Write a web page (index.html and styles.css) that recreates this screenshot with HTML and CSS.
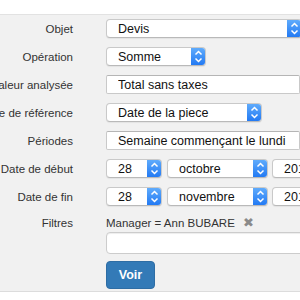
FILE: index.html
```html
<!DOCTYPE html>
<html>
  <head>
    <meta charset="utf-8" />
    <title>Analyse</title>
    <link rel="stylesheet" href="styles.css">
  </head>
  <body>
    <header class="topbar"></header>
    <main class="form">
      <div class="label">Objet</div>
      <div class="field">
        <div class="select w-objet">
          <span class="value">Devis</span>
          <span class="arrow"><svg width="15" height="19" viewBox="0 0 15 19"><path d="M4.5 7.5 7.5 4.5 10.5 7.5M4.5 11.5 7.5 14.5 10.5 11.5" fill="none" stroke="#fff" stroke-width="1.5"/></svg></span>
        </div>
      </div>

      <div class="label">Opération</div>
      <div class="field">
        <div class="select w-op">
          <span class="value">Somme</span>
          <span class="arrow"><svg width="15" height="19" viewBox="0 0 15 19"><path d="M4.5 7.5 7.5 4.5 10.5 7.5M4.5 11.5 7.5 14.5 10.5 11.5" fill="none" stroke="#fff" stroke-width="1.5"/></svg></span>
        </div>
      </div>

      <div class="label">Valeur analysée</div>
      <div class="field">
        <input class="text w-wide" type="text" value="Total sans taxes" />
      </div>

      <div class="label">Date de référence</div>
      <div class="field">
        <div class="select w-ref">
          <span class="value">Date de la piece</span>
          <span class="arrow"><svg width="15" height="19" viewBox="0 0 15 19"><path d="M4.5 7.5 7.5 4.5 10.5 7.5M4.5 11.5 7.5 14.5 10.5 11.5" fill="none" stroke="#fff" stroke-width="1.5"/></svg></span>
        </div>
      </div>

      <div class="label">Périodes</div>
      <div class="field">
        <input class="text w-wide" type="text" value="Semaine commençant le lundi" />
      </div>

      <div class="label">Date de début</div>
      <div class="field dates">
        <div class="select w-day">
          <span class="value">28</span>
          <span class="arrow"><svg width="15" height="19" viewBox="0 0 15 19"><path d="M4.5 7.5 7.5 4.5 10.5 7.5M4.5 11.5 7.5 14.5 10.5 11.5" fill="none" stroke="#fff" stroke-width="1.5"/></svg></span>
        </div>
        <div class="select w-month">
          <span class="value">octobre</span>
          <span class="arrow"><svg width="15" height="19" viewBox="0 0 15 19"><path d="M4.5 7.5 7.5 4.5 10.5 7.5M4.5 11.5 7.5 14.5 10.5 11.5" fill="none" stroke="#fff" stroke-width="1.5"/></svg></span>
        </div>
        <div class="select w-year">
          <span class="value">2016</span>
        </div>
      </div>

      <div class="label">Date de fin</div>
      <div class="field dates">
        <div class="select w-day">
          <span class="value">28</span>
          <span class="arrow"><svg width="15" height="19" viewBox="0 0 15 19"><path d="M4.5 7.5 7.5 4.5 10.5 7.5M4.5 11.5 7.5 14.5 10.5 11.5" fill="none" stroke="#fff" stroke-width="1.5"/></svg></span>
        </div>
        <div class="select w-month">
          <span class="value">novembre</span>
          <span class="arrow"><svg width="15" height="19" viewBox="0 0 15 19"><path d="M4.5 7.5 7.5 4.5 10.5 7.5M4.5 11.5 7.5 14.5 10.5 11.5" fill="none" stroke="#fff" stroke-width="1.5"/></svg></span>
        </div>
        <div class="select w-year">
          <span class="value">2016</span>
        </div>
      </div>

      <div class="label top">Filtres</div>
      <div class="field filters">
        <div class="tag">Manager = Ann BUBARE <span class="remove">✖</span></div>
        <input class="text filter-input" type="text" value="" />
        <button class="btn">Voir</button>
      </div>
    </main>
    <footer class="bottom"></footer>
  </body>
</html>
```

FILE: styles.css
```css
html,
body {
  margin: 0;
  background-color: #fff;
  font-family: "Liberation Sans", Arial, sans-serif;
  overflow: hidden;
}
*,
*:before,
*:after {
  box-sizing: border-box;
}
.topbar {
  height: 15px;
  border-bottom: 1px solid #e2e2e2;
  background-color: #fff;
}
.form {
  display: grid;
  grid-template-columns: 73px 1fr;
  column-gap: 33px;
  row-gap: 9px;
  padding: 4px 0 2px;
  background-color: #f1f1f1;
}
.label {
  display: flex;
  justify-content: flex-end;
  align-items: center;
  white-space: nowrap;
  font-size: 11.5px;
  color: #333;
}
.label.top {
  align-items: flex-start;
  line-height: 16px;
}
.field {
  display: flex;
  min-width: 0;
  white-space: nowrap;
}
.dates {
  gap: 5px;
}
.dates .w-month {
  margin-right: -1px;
}
.select {
  display: flex;
  align-items: center;
  flex: none;
  height: 19px;
  background-color: #fff;
  border: 1px solid #c9c9c9;
  border-bottom-color: #b9b9b9;
  border-radius: 4px;
  overflow: hidden;
  box-shadow: 0 1px 1px rgba(0, 0, 0, 0.06);
}
.value {
  flex: 1;
  padding-left: 11px;
  font-size: 12.5px;
  color: #111;
}
.arrow {
  display: flex;
  width: 15px;
  height: 19px;
  margin: -1px -1px -1px 0;
  background: linear-gradient(#63aefc, #1f77f3);
}
.w-objet {
  width: 196px;
}
.w-op {
  width: 100px;
}
.w-ref {
  width: 156px;
}
.w-day {
  width: 56px;
}
.w-month {
  width: 101px;
}
.w-year {
  width: 60px;
}
.text {
  height: 19px;
  padding: 0 0 0 11px;
  border: 1px solid #c9c9c9;
  border-top-color: #b5b5b5;
  border-radius: 2px;
  background-color: #fff;
  font-family: inherit;
  font-size: 12.5px;
  color: #111;
  outline: none;
}
.w-wide {
  width: 220px;
}
.filters {
  flex-direction: column;
  align-items: flex-start;
}
.tag {
  line-height: 16px;
  font-size: 11.5px;
  color: #333;
}
.remove {
  margin-left: 5px;
  font-family: "DejaVu Sans", sans-serif;
  font-size: 13px;
  color: #8a8a8a;
}
.filter-input {
  width: 220px;
  height: 22px;
  margin-top: 1px;
  border-radius: 4px;
  border-color: #ccc;
  box-shadow: inset 0 1px 1px rgba(0, 0, 0, 0.075);
}
.btn {
  margin-top: 7px;
  width: 49px;
  height: 28px;
  padding: 0;
  border: 1px solid #2e6da4;
  border-radius: 4px;
  background-color: #337ab7;
  font-family: inherit;
  font-size: 12.5px;
  font-weight: bold;
  color: #fff;
}
.bottom {
  height: 20px;
  border-top: 1px solid #dcdcdc;
  background-color: #fff;
}
```
